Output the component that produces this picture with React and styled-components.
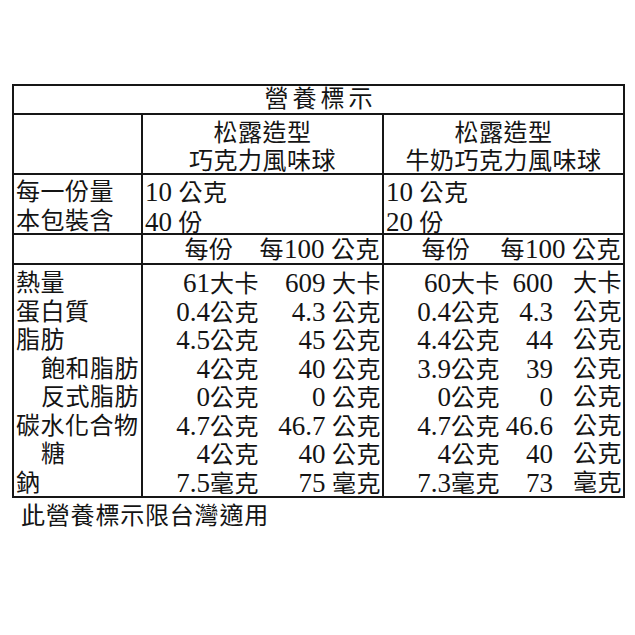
import React from "react";
import styled, { createGlobalStyle } from "styled-components";

const GlobalStyle = createGlobalStyle`
  html, body {
    margin: 0;
    padding: 0;
    background: #ffffff;
  }
  body {
    font-family: "Liberation Serif", "Noto Sans CJK TC", serif;
    color: #141414;
  }
`;

const Page = styled.div`
  padding: 84px 0 0 12px;
`;

const Label = styled.div`
  width: 613px;
  box-sizing: border-box;
  border: 2px solid #161616;
  font-size: 24px;
  letter-spacing: 0.5px;
`;

const TitleRow = styled.div`
  height: 29px;
  box-sizing: border-box;
  border-bottom: 2px solid #161616;
  display: flex;
  align-items: center;
  justify-content: center;
  line-height: 27px;
  letter-spacing: 4px;
  padding-left: 4px;
`;

const Row = styled.div`
  display: grid;
  grid-template-columns: 127px 241px 241px;
  height: ${(props) => props.$height}px;
  box-sizing: border-box;
  border-bottom: ${(props) => (props.$last ? "none" : "2px solid #161616")};
`;

const Cell = styled.div`
  box-sizing: border-box;
  border-left: ${(props) => (props.$divider ? "2px solid #161616" : "none")};
  min-width: 0;
`;

const ProductCell = styled(Cell)`
  display: flex;
  flex-direction: column;
  align-items: center;
  padding-top: 4px;
  line-height: 28px;
`;

const StackCell = styled(Cell)`
  display: flex;
  flex-direction: column;
  padding: ${(props) => props.$top || 2}px 0 0 2px;
  line-height: ${(props) => props.$lh || 29}px;
`;

const HeadCell = styled(Cell)`
  display: flex;
  justify-content: flex-end;
  align-items: center;
  gap: ${(props) => props.$gap}px;
  padding-right: 2px;
  line-height: 28px;
`;

const LabelLine = styled.div`
  padding-left: ${(props) => (props.$indent ? 25 : 0)}px;
  white-space: nowrap;
  height: 28.5px;
`;

const ValueGrid = styled.div`
  display: grid;
  grid-template-columns: ${(props) => props.$cols};
  grid-auto-rows: 28.5px;
  justify-items: end;
  padding-top: 4px;
  padding-right: 1px;
  line-height: 28.5px;
  white-space: nowrap;
`;

const Num = styled.span`
  font-size: 27px;
  letter-spacing: 0;
`;

const Footnote = styled.div`
  padding: 4px 0 0 9px;
  font-size: 24px;
  letter-spacing: 0.8px;
  line-height: 28px;
`;

// wrap digit runs so they get the taller serif figures
function Txt({ children }) {
  const parts = String(children).split(/([0-9.]+)/);
  return (
    <span>
      {parts.map((p, i) =>
        /^[0-9.]+$/.test(p) ? <Num key={i}>{p}</Num> : p
      )}
    </span>
  );
}

const nutrients = [
  { label: "熱量", a: ["61大卡", "609 大卡"], b: ["60大卡", "600", "大卡"] },
  { label: "蛋白質", a: ["0.4公克", "4.3 公克"], b: ["0.4公克", "4.3", "公克"] },
  { label: "脂肪", a: ["4.5公克", "45 公克"], b: ["4.4公克", "44", "公克"] },
  { label: "飽和脂肪", indent: true, a: ["4公克", "40 公克"], b: ["3.9公克", "39", "公克"] },
  { label: "反式脂肪", indent: true, a: ["0公克", "0 公克"], b: ["0公克", "0", "公克"] },
  { label: "碳水化合物", a: ["4.7公克", "46.7 公克"], b: ["4.7公克", "46.6", "公克"] },
  { label: "糖", indent: true, a: ["4公克", "40 公克"], b: ["4公克", "40", "公克"] },
  { label: "鈉", a: ["7.5毫克", "75 毫克"], b: ["7.3毫克", "73", "毫克"] },
];

export default function App() {
  return (
    <Page>
      <GlobalStyle />
      <Label>
        <TitleRow>營養標示</TitleRow>

        <Row $height={60}>
          <Cell />
          <ProductCell $divider>
            <span>松露造型</span>
            <span>巧克力風味球</span>
          </ProductCell>
          <ProductCell $divider>
            <span>松露造型</span>
            <span>牛奶巧克力風味球</span>
          </ProductCell>
        </Row>

        <Row $height={60}>
          <StackCell $top={3}>
            <span>每一份量</span>
            <span>本包裝含</span>
          </StackCell>
          <StackCell $divider $top={3}>
            <Txt>10 公克</Txt>
            <Txt>40 份</Txt>
          </StackCell>
          <StackCell $divider $top={3}>
            <Txt>10 公克</Txt>
            <Txt>20 份</Txt>
          </StackCell>
        </Row>

        <Row $height={30}>
          <Cell />
          <HeadCell $divider $gap={26}>
            <span>每份</span>
            <Txt>每100 公克</Txt>
          </HeadCell>
          <HeadCell $divider $gap={30}>
            <span>每份</span>
            <Txt>每100 公克</Txt>
          </HeadCell>
        </Row>

        <Row $height={231} $last>
          <StackCell $top={4} $lh={28.5}>
            {nutrients.map((n) => (
              <LabelLine key={n.label} $indent={n.indent}>
                {n.label}
              </LabelLine>
            ))}
          </StackCell>
          <Cell $divider>
            <ValueGrid $cols="116px 1fr">
              {nutrients.map((n) => (
                <React.Fragment key={n.label}>
                  <Txt>{n.a[0]}</Txt>
                  <Txt>{n.a[1]}</Txt>
                </React.Fragment>
              ))}
            </ValueGrid>
          </Cell>
          <Cell $divider>
            <ValueGrid $cols="116px 53px 1fr">
              {nutrients.map((n) => (
                <React.Fragment key={n.label}>
                  <Txt>{n.b[0]}</Txt>
                  <Txt>{n.b[1]}</Txt>
                  <Txt>{n.b[2]}</Txt>
                </React.Fragment>
              ))}
            </ValueGrid>
          </Cell>
        </Row>
      </Label>
      <Footnote>此營養標示限台灣適用</Footnote>
    </Page>
  );
}
